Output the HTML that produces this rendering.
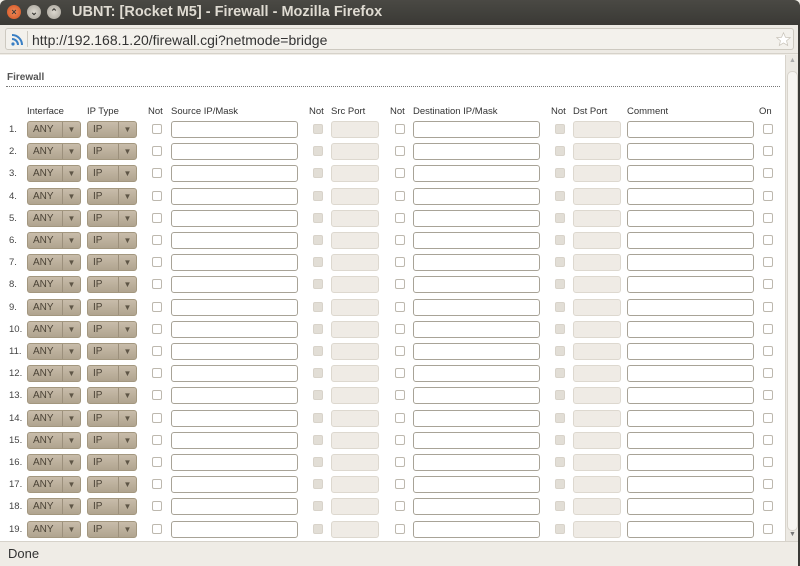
<!DOCTYPE html>
<html><head><meta charset="utf-8"><style>
*{margin:0;padding:0;box-sizing:border-box}
body{width:800px;height:566px;overflow:hidden;background:#f0ede7;font-family:"Liberation Sans",sans-serif;position:relative}
#title{position:absolute;left:0;top:0;width:800px;height:25px;background:linear-gradient(#4a4944,#3a3935);border-radius:6px 6px 0 0}
#title .t{position:absolute;left:72px;top:4px;color:#dfdbd2;font-weight:bold;font-size:14.5px;font-family:"Liberation Sans",sans-serif}
.wb{position:absolute;top:5px;width:14px;height:14px;border-radius:50%;color:#3c3b37;font-size:9px;text-align:center;line-height:14px;font-weight:bold}
#url{position:absolute;left:0;top:25px;width:800px;height:29px;background:#edeae4;border-bottom:1px solid #d6d2ca}
#ubox{position:absolute;left:5px;top:3px;width:789px;height:22px;background:#f3f1ec;border:1px solid #cdc9c0;border-radius:3px}
#ubox .u{position:absolute;left:26px;top:3px;font-size:14px;color:#333;font-family:"Liberation Sans",sans-serif}
#content{position:absolute;left:0;top:55px;width:785px;height:486px;background:#fff}
#sb{position:absolute;left:785px;top:55px;width:13px;height:486px;background:#ece9e3;border-left:1px solid #d8d4cc}
#rb{position:absolute;left:798px;top:25px;width:2px;height:541px;background:#3a3935}
#status{position:absolute;left:0;top:541px;width:798px;height:25px;background:#efece6;border-top:1px solid #d6d2ca}
#status span{position:absolute;left:8px;top:4px;font-size:13px;color:#333;font-family:"Liberation Sans",sans-serif}
h1{position:absolute;left:7px;top:72px;font-size:10px;font-weight:bold;color:#555}
#dl{position:absolute;left:6px;top:86px;width:774px;border-top:1px dotted #777}
.h{position:absolute;top:106px;font-size:9.5px;color:#333}
.r{position:absolute;left:0;width:785px;height:17px}
.r .n{position:absolute;left:9px;top:3px;font-size:9.5px;color:#444}
.sel{position:absolute;top:0;height:17px;border-radius:3px;background:linear-gradient(#c8bcaa,#b0a48f);border:1px solid #a3977f;font-size:10px}
.sel span{position:absolute;left:5px;top:2px;color:#4b4336}
.sel i{position:absolute;right:0;top:0;width:18px;height:15px;border-left:1px solid #9c907c;font-style:normal;font-size:8px;color:#5e5546;text-align:center;line-height:15px}
.cb{position:absolute;top:3px;width:10px;height:10px;border:1px solid #bdb8ae;border-radius:2px;background:#fff}
.cbd{background:#e2ded6;border-color:#d8d3ca}
.in{position:absolute;top:0;height:17px;border:1px solid #a8a397;border-radius:3px;background:#fff}
.ind{background:#efebe5;border-color:#ddd8cf}
</style></head><body>
<div id="title">
<div class="wb" style="left:7px;background:radial-gradient(#f08c5c,#d2511f)">×</div>
<div class="wb" style="left:27px;background:radial-gradient(#dcd8cf,#a5a198)">⌄</div>
<div class="wb" style="left:47px;background:radial-gradient(#dcd8cf,#a5a198)">⌃</div>
<span class="t">UBNT: [Rocket M5] - Firewall - Mozilla Firefox</span></div>
<div id="url"><div id="ubox">
<svg style="position:absolute;left:5px;top:4px" width="13" height="13" viewBox="0 0 13 13"><circle cx="2" cy="11" r="1.6" fill="#3a7fc4"/><path d="M1 6a6 6 0 0 1 6 6M1 2a10 10 0 0 1 10 10" stroke="#3a7fc4" stroke-width="2" fill="none"/></svg>
<div style="position:absolute;left:21px;top:2px;width:1px;height:16px;background:#cdc9c0"></div>
<span class="u">http://192.168.1.20/firewall.cgi?netmode=bridge</span>
<svg style="position:absolute;left:770px;top:3px" width="15" height="15" viewBox="0 0 20 20"><path d="M10 1l2.6 6 6.4.5-4.9 4.2 1.5 6.3L10 14.6 4.4 18l1.5-6.3L1 7.5 7.4 7z" fill="#fff" stroke="#c9c4ba"/></svg>
</div></div>
<div id="content">
</div>
<div id="sb"><span style="position:absolute;left:3px;top:2px;font-size:7px;color:#aaa">▲</span><div style="position:absolute;left:1px;top:16px;width:11px;height:460px;background:#f7f5f1;border:1px solid #d8d4cc;border-radius:5px"></div><span style="position:absolute;left:3px;top:476px;font-size:7px;color:#777">▼</span></div>
<div id="rb"></div>
<div id="status"><span>Done</span></div>
<h1>Firewall</h1><div id="dl"></div>
<span class="h" style="left:27px">Interface</span>
<span class="h" style="left:87px">IP Type</span>
<span class="h" style="left:148px">Not</span>
<span class="h" style="left:171px">Source IP/Mask</span>
<span class="h" style="left:309px">Not</span>
<span class="h" style="left:331px">Src Port</span>
<span class="h" style="left:390px">Not</span>
<span class="h" style="left:413px">Destination IP/Mask</span>
<span class="h" style="left:551px">Not</span>
<span class="h" style="left:573px">Dst Port</span>
<span class="h" style="left:627px">Comment</span>
<span class="h" style="left:759px">On</span>
<div id="rows">
<div class="r" style="top:121px"><span class="n">1.</span><div class="sel" style="left:27px;width:54px"><span>ANY</span><i>▼</i></div><div class="sel" style="left:87px;width:50px"><span>IP</span><i>▼</i></div><div class="cb" style="left:152px"></div><div class="in" style="left:171px;width:127px"></div><div class="cb cbd" style="left:313px"></div><div class="in ind" style="left:331px;width:48px"></div><div class="cb" style="left:395px"></div><div class="in" style="left:413px;width:127px"></div><div class="cb cbd" style="left:555px"></div><div class="in ind" style="left:573px;width:48px"></div><div class="in" style="left:627px;width:127px"></div><div class="cb" style="left:763px"></div></div>
<div class="r" style="top:143px"><span class="n">2.</span><div class="sel" style="left:27px;width:54px"><span>ANY</span><i>▼</i></div><div class="sel" style="left:87px;width:50px"><span>IP</span><i>▼</i></div><div class="cb" style="left:152px"></div><div class="in" style="left:171px;width:127px"></div><div class="cb cbd" style="left:313px"></div><div class="in ind" style="left:331px;width:48px"></div><div class="cb" style="left:395px"></div><div class="in" style="left:413px;width:127px"></div><div class="cb cbd" style="left:555px"></div><div class="in ind" style="left:573px;width:48px"></div><div class="in" style="left:627px;width:127px"></div><div class="cb" style="left:763px"></div></div>
<div class="r" style="top:165px"><span class="n">3.</span><div class="sel" style="left:27px;width:54px"><span>ANY</span><i>▼</i></div><div class="sel" style="left:87px;width:50px"><span>IP</span><i>▼</i></div><div class="cb" style="left:152px"></div><div class="in" style="left:171px;width:127px"></div><div class="cb cbd" style="left:313px"></div><div class="in ind" style="left:331px;width:48px"></div><div class="cb" style="left:395px"></div><div class="in" style="left:413px;width:127px"></div><div class="cb cbd" style="left:555px"></div><div class="in ind" style="left:573px;width:48px"></div><div class="in" style="left:627px;width:127px"></div><div class="cb" style="left:763px"></div></div>
<div class="r" style="top:188px"><span class="n">4.</span><div class="sel" style="left:27px;width:54px"><span>ANY</span><i>▼</i></div><div class="sel" style="left:87px;width:50px"><span>IP</span><i>▼</i></div><div class="cb" style="left:152px"></div><div class="in" style="left:171px;width:127px"></div><div class="cb cbd" style="left:313px"></div><div class="in ind" style="left:331px;width:48px"></div><div class="cb" style="left:395px"></div><div class="in" style="left:413px;width:127px"></div><div class="cb cbd" style="left:555px"></div><div class="in ind" style="left:573px;width:48px"></div><div class="in" style="left:627px;width:127px"></div><div class="cb" style="left:763px"></div></div>
<div class="r" style="top:210px"><span class="n">5.</span><div class="sel" style="left:27px;width:54px"><span>ANY</span><i>▼</i></div><div class="sel" style="left:87px;width:50px"><span>IP</span><i>▼</i></div><div class="cb" style="left:152px"></div><div class="in" style="left:171px;width:127px"></div><div class="cb cbd" style="left:313px"></div><div class="in ind" style="left:331px;width:48px"></div><div class="cb" style="left:395px"></div><div class="in" style="left:413px;width:127px"></div><div class="cb cbd" style="left:555px"></div><div class="in ind" style="left:573px;width:48px"></div><div class="in" style="left:627px;width:127px"></div><div class="cb" style="left:763px"></div></div>
<div class="r" style="top:232px"><span class="n">6.</span><div class="sel" style="left:27px;width:54px"><span>ANY</span><i>▼</i></div><div class="sel" style="left:87px;width:50px"><span>IP</span><i>▼</i></div><div class="cb" style="left:152px"></div><div class="in" style="left:171px;width:127px"></div><div class="cb cbd" style="left:313px"></div><div class="in ind" style="left:331px;width:48px"></div><div class="cb" style="left:395px"></div><div class="in" style="left:413px;width:127px"></div><div class="cb cbd" style="left:555px"></div><div class="in ind" style="left:573px;width:48px"></div><div class="in" style="left:627px;width:127px"></div><div class="cb" style="left:763px"></div></div>
<div class="r" style="top:254px"><span class="n">7.</span><div class="sel" style="left:27px;width:54px"><span>ANY</span><i>▼</i></div><div class="sel" style="left:87px;width:50px"><span>IP</span><i>▼</i></div><div class="cb" style="left:152px"></div><div class="in" style="left:171px;width:127px"></div><div class="cb cbd" style="left:313px"></div><div class="in ind" style="left:331px;width:48px"></div><div class="cb" style="left:395px"></div><div class="in" style="left:413px;width:127px"></div><div class="cb cbd" style="left:555px"></div><div class="in ind" style="left:573px;width:48px"></div><div class="in" style="left:627px;width:127px"></div><div class="cb" style="left:763px"></div></div>
<div class="r" style="top:276px"><span class="n">8.</span><div class="sel" style="left:27px;width:54px"><span>ANY</span><i>▼</i></div><div class="sel" style="left:87px;width:50px"><span>IP</span><i>▼</i></div><div class="cb" style="left:152px"></div><div class="in" style="left:171px;width:127px"></div><div class="cb cbd" style="left:313px"></div><div class="in ind" style="left:331px;width:48px"></div><div class="cb" style="left:395px"></div><div class="in" style="left:413px;width:127px"></div><div class="cb cbd" style="left:555px"></div><div class="in ind" style="left:573px;width:48px"></div><div class="in" style="left:627px;width:127px"></div><div class="cb" style="left:763px"></div></div>
<div class="r" style="top:299px"><span class="n">9.</span><div class="sel" style="left:27px;width:54px"><span>ANY</span><i>▼</i></div><div class="sel" style="left:87px;width:50px"><span>IP</span><i>▼</i></div><div class="cb" style="left:152px"></div><div class="in" style="left:171px;width:127px"></div><div class="cb cbd" style="left:313px"></div><div class="in ind" style="left:331px;width:48px"></div><div class="cb" style="left:395px"></div><div class="in" style="left:413px;width:127px"></div><div class="cb cbd" style="left:555px"></div><div class="in ind" style="left:573px;width:48px"></div><div class="in" style="left:627px;width:127px"></div><div class="cb" style="left:763px"></div></div>
<div class="r" style="top:321px"><span class="n">10.</span><div class="sel" style="left:27px;width:54px"><span>ANY</span><i>▼</i></div><div class="sel" style="left:87px;width:50px"><span>IP</span><i>▼</i></div><div class="cb" style="left:152px"></div><div class="in" style="left:171px;width:127px"></div><div class="cb cbd" style="left:313px"></div><div class="in ind" style="left:331px;width:48px"></div><div class="cb" style="left:395px"></div><div class="in" style="left:413px;width:127px"></div><div class="cb cbd" style="left:555px"></div><div class="in ind" style="left:573px;width:48px"></div><div class="in" style="left:627px;width:127px"></div><div class="cb" style="left:763px"></div></div>
<div class="r" style="top:343px"><span class="n">11.</span><div class="sel" style="left:27px;width:54px"><span>ANY</span><i>▼</i></div><div class="sel" style="left:87px;width:50px"><span>IP</span><i>▼</i></div><div class="cb" style="left:152px"></div><div class="in" style="left:171px;width:127px"></div><div class="cb cbd" style="left:313px"></div><div class="in ind" style="left:331px;width:48px"></div><div class="cb" style="left:395px"></div><div class="in" style="left:413px;width:127px"></div><div class="cb cbd" style="left:555px"></div><div class="in ind" style="left:573px;width:48px"></div><div class="in" style="left:627px;width:127px"></div><div class="cb" style="left:763px"></div></div>
<div class="r" style="top:365px"><span class="n">12.</span><div class="sel" style="left:27px;width:54px"><span>ANY</span><i>▼</i></div><div class="sel" style="left:87px;width:50px"><span>IP</span><i>▼</i></div><div class="cb" style="left:152px"></div><div class="in" style="left:171px;width:127px"></div><div class="cb cbd" style="left:313px"></div><div class="in ind" style="left:331px;width:48px"></div><div class="cb" style="left:395px"></div><div class="in" style="left:413px;width:127px"></div><div class="cb cbd" style="left:555px"></div><div class="in ind" style="left:573px;width:48px"></div><div class="in" style="left:627px;width:127px"></div><div class="cb" style="left:763px"></div></div>
<div class="r" style="top:387px"><span class="n">13.</span><div class="sel" style="left:27px;width:54px"><span>ANY</span><i>▼</i></div><div class="sel" style="left:87px;width:50px"><span>IP</span><i>▼</i></div><div class="cb" style="left:152px"></div><div class="in" style="left:171px;width:127px"></div><div class="cb cbd" style="left:313px"></div><div class="in ind" style="left:331px;width:48px"></div><div class="cb" style="left:395px"></div><div class="in" style="left:413px;width:127px"></div><div class="cb cbd" style="left:555px"></div><div class="in ind" style="left:573px;width:48px"></div><div class="in" style="left:627px;width:127px"></div><div class="cb" style="left:763px"></div></div>
<div class="r" style="top:410px"><span class="n">14.</span><div class="sel" style="left:27px;width:54px"><span>ANY</span><i>▼</i></div><div class="sel" style="left:87px;width:50px"><span>IP</span><i>▼</i></div><div class="cb" style="left:152px"></div><div class="in" style="left:171px;width:127px"></div><div class="cb cbd" style="left:313px"></div><div class="in ind" style="left:331px;width:48px"></div><div class="cb" style="left:395px"></div><div class="in" style="left:413px;width:127px"></div><div class="cb cbd" style="left:555px"></div><div class="in ind" style="left:573px;width:48px"></div><div class="in" style="left:627px;width:127px"></div><div class="cb" style="left:763px"></div></div>
<div class="r" style="top:432px"><span class="n">15.</span><div class="sel" style="left:27px;width:54px"><span>ANY</span><i>▼</i></div><div class="sel" style="left:87px;width:50px"><span>IP</span><i>▼</i></div><div class="cb" style="left:152px"></div><div class="in" style="left:171px;width:127px"></div><div class="cb cbd" style="left:313px"></div><div class="in ind" style="left:331px;width:48px"></div><div class="cb" style="left:395px"></div><div class="in" style="left:413px;width:127px"></div><div class="cb cbd" style="left:555px"></div><div class="in ind" style="left:573px;width:48px"></div><div class="in" style="left:627px;width:127px"></div><div class="cb" style="left:763px"></div></div>
<div class="r" style="top:454px"><span class="n">16.</span><div class="sel" style="left:27px;width:54px"><span>ANY</span><i>▼</i></div><div class="sel" style="left:87px;width:50px"><span>IP</span><i>▼</i></div><div class="cb" style="left:152px"></div><div class="in" style="left:171px;width:127px"></div><div class="cb cbd" style="left:313px"></div><div class="in ind" style="left:331px;width:48px"></div><div class="cb" style="left:395px"></div><div class="in" style="left:413px;width:127px"></div><div class="cb cbd" style="left:555px"></div><div class="in ind" style="left:573px;width:48px"></div><div class="in" style="left:627px;width:127px"></div><div class="cb" style="left:763px"></div></div>
<div class="r" style="top:476px"><span class="n">17.</span><div class="sel" style="left:27px;width:54px"><span>ANY</span><i>▼</i></div><div class="sel" style="left:87px;width:50px"><span>IP</span><i>▼</i></div><div class="cb" style="left:152px"></div><div class="in" style="left:171px;width:127px"></div><div class="cb cbd" style="left:313px"></div><div class="in ind" style="left:331px;width:48px"></div><div class="cb" style="left:395px"></div><div class="in" style="left:413px;width:127px"></div><div class="cb cbd" style="left:555px"></div><div class="in ind" style="left:573px;width:48px"></div><div class="in" style="left:627px;width:127px"></div><div class="cb" style="left:763px"></div></div>
<div class="r" style="top:498px"><span class="n">18.</span><div class="sel" style="left:27px;width:54px"><span>ANY</span><i>▼</i></div><div class="sel" style="left:87px;width:50px"><span>IP</span><i>▼</i></div><div class="cb" style="left:152px"></div><div class="in" style="left:171px;width:127px"></div><div class="cb cbd" style="left:313px"></div><div class="in ind" style="left:331px;width:48px"></div><div class="cb" style="left:395px"></div><div class="in" style="left:413px;width:127px"></div><div class="cb cbd" style="left:555px"></div><div class="in ind" style="left:573px;width:48px"></div><div class="in" style="left:627px;width:127px"></div><div class="cb" style="left:763px"></div></div>
<div class="r" style="top:521px"><span class="n">19.</span><div class="sel" style="left:27px;width:54px"><span>ANY</span><i>▼</i></div><div class="sel" style="left:87px;width:50px"><span>IP</span><i>▼</i></div><div class="cb" style="left:152px"></div><div class="in" style="left:171px;width:127px"></div><div class="cb cbd" style="left:313px"></div><div class="in ind" style="left:331px;width:48px"></div><div class="cb" style="left:395px"></div><div class="in" style="left:413px;width:127px"></div><div class="cb cbd" style="left:555px"></div><div class="in ind" style="left:573px;width:48px"></div><div class="in" style="left:627px;width:127px"></div><div class="cb" style="left:763px"></div></div>
</div>
</body></html>
